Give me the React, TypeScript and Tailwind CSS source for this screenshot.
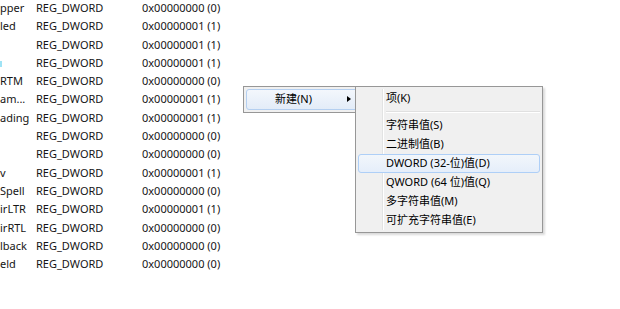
import React from "react";

const rows = [
  { name: "pper", value: "0x00000000 (0)" },
  { name: "led", value: "0x00000001 (1)" },
  { name: "", value: "0x00000001 (1)" },
  { name: "", value: "0x00000001 (1)", mark: true },
  { name: "RTM", value: "0x00000000 (0)" },
  { name: "am...", value: "0x00000001 (1)" },
  { name: "ading", value: "0x00000001 (1)" },
  { name: "", value: "0x00000000 (0)" },
  { name: "", value: "0x00000000 (0)" },
  { name: "v", value: "0x00000001 (1)" },
  { name: "Spell", value: "0x00000000 (0)" },
  { name: "irLTR", value: "0x00000001 (1)" },
  { name: "irRTL", value: "0x00000000 (0)" },
  { name: "lback", value: "0x00000000 (0)" },
  { name: "eld", value: "0x00000000 (0)" },
];

const subItems = [
  "字符串值(S)",
  "二进制值(B)",
  "DWORD (32-位)值(D)",
  "QWORD (64 位)值(Q)",
  "多字符串值(M)",
  "可扩充字符串值(E)",
];

const font = {
  fontFamily: '"Noto Sans", "Noto Sans CJK SC", sans-serif',
};

export default function App() {
  return (
    <div
      className="relative w-[620px] h-[309px] bg-white overflow-hidden text-[11px] text-[#151515]"
      style={font}
    >
      {/* registry values list */}
      <div className="flex flex-col gap-[3.3px]">
        {rows.map((r, i) => (
          <div key={i} className="flex items-center h-[15px] leading-[15px]">
            <div className="w-[36px] shrink-0 whitespace-nowrap">
              {r.mark ? (
                <span className="inline-block w-[2px] h-[6px] bg-[#9fe3f5]" />
              ) : (
                r.name
              )}
            </div>
            <div className="w-[106px] shrink-0">REG_DWORD</div>
            <div>{r.value}</div>
          </div>
        ))}
      </div>

      {/* context menu */}
      <div className="absolute left-[243px] top-[86px] w-[122px] h-[27px] bg-[#f0f0f0] border border-[#979797] p-[2px]">
        <div className="relative flex items-center h-[21px] rounded-[3px] border border-[#b4cff0] bg-gradient-to-b from-[#f3f7fc] to-[#e3ecf8]">
          <span className="ml-[28px] text-black">新建(N)</span>
          <span className="absolute left-[100px] top-[6px] w-0 h-0 border-y-[3.5px] border-y-transparent border-l-[4px] border-l-black" />
        </div>
      </div>

      {/* submenu */}
      <div className="absolute left-[355px] top-[86px] w-[188px] bg-[#f0f0f0] border border-[#979797] p-[2px] shadow-[2px_2px_2px_rgba(0,0,0,0.15)]">
        <div className="absolute left-[26px] top-[2px] bottom-[2px] w-[2px] border-l border-[#e2e3e3] bg-white" />
        <div className="relative flex items-center h-[19px] pl-[28px] text-black">项(K)</div>
        <div className="relative h-[8px] flex flex-col justify-center ml-[28px]">
          <div className="h-px bg-[#e0e0e0]" />
          <div className="h-px bg-white" />
        </div>
        {subItems.map((t, i) =>
          i === 2 ? (
            <div
              key={t}
              className="relative flex items-center h-[19px] pl-[27px] rounded-[3px] border border-[#aecff7] bg-gradient-to-b from-[#f2f6fb] to-[#e5eefa] text-black"
            >
              {t}
            </div>
          ) : (
            <div key={t} className="relative flex items-center h-[19px] pl-[28px] text-black">
              {t}
            </div>
          )
        )}
      </div>
    </div>
  );
}
